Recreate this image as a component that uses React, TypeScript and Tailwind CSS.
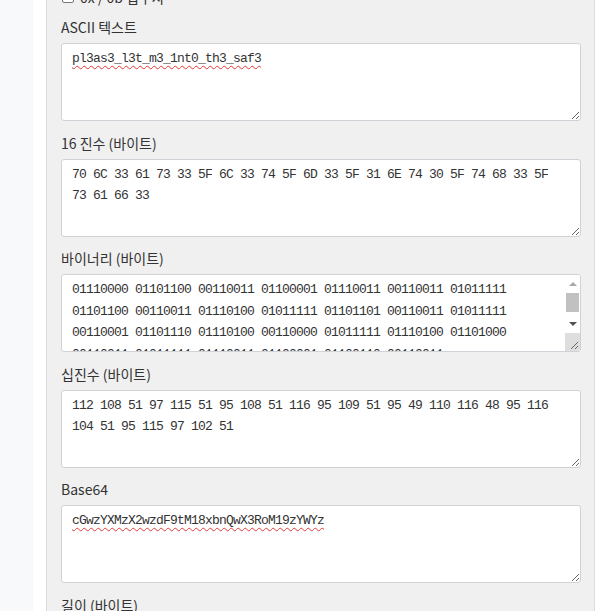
import React from "react";

const mono = { fontFamily: '"Liberation Mono", "DejaVu Sans Mono", monospace' };

const ascii = "pl3as3_l3t_m3_1nt0_th3_saf3";
const bytes = Array.from(ascii).map((c) => c.charCodeAt(0));
const hex = bytes.map((b) => b.toString(16).toUpperCase().padStart(2, "0")).join(" ");
const bin = bytes.map((b) => b.toString(2).padStart(8, "0")).join(" ");
const dec = bytes.join(" ");
const b64 = "cGwzYXMzX2wzdF9tM18xbnQwX3RoM19zYWYz";

function FakeScrollbar() {
  return (
    <div className="absolute top-[1px] right-[1px] bottom-[1px] w-[15px] bg-white flex flex-col pointer-events-none rounded-tr-[2px] rounded-br-[2px] overflow-hidden">
      <div className="h-[17px] flex items-center justify-center">
        <svg width="8" height="5" viewBox="0 0 8 5">
          <path d="M0 5 L4 1 L8 5 Z" fill="#a8a8a8" />
        </svg>
      </div>
      <div className="h-[24px] pt-[1px] px-[1px]">
        <div className="h-[19px] bg-[#c1c1c1]" />
      </div>
      <div className="h-[17px] flex items-center justify-center">
        <svg width="8" height="5" viewBox="0 0 8 5">
          <path d="M0 0 L8 0 L4 4 Z" fill="#505050" />
        </svg>
      </div>
      <div className="flex-1 bg-[#dedede] relative">
        <svg className="absolute right-[1px] bottom-[1px]" width="10" height="10" viewBox="0 0 10 10">
          <path d="M9 2 L2 9 M9 6 L6 9" stroke="#6b6b6b" strokeWidth="1" />
        </svg>
      </div>
    </div>
  );
}

function Field({
  label,
  value,
  wavy,
  scroll,
}: {
  label: string;
  value: string;
  wavy?: boolean;
  scroll?: boolean;
}) {
  return (
    <div className="flex flex-col mb-[11.5px]">
      <div className="h-[20px] leading-[20px] text-[14px] text-[#333] mb-[6px]">{label}</div>
      <div className="relative">
        <textarea
          readOnly
          spellCheck={false}
          value={value}
          style={mono}
          className={
            "block w-full h-[78px] bg-white border border-[#cfd2d6] rounded-[3px] pl-[10px] pr-[20px] pt-[4px] text-[13px] tracking-[-0.8px] leading-[21.5px] text-[#333] outline-none " +
            (scroll ? "overflow-hidden " : "") +
            (wavy ? "underline decoration-wavy decoration-[#e53935] decoration-[1px] underline-offset-[3px]" : "")
          }
        />
        {scroll && <FakeScrollbar />}
      </div>
    </div>
  );
}

export default function App() {
  return (
    <div
      className="w-[600px] h-[611px] overflow-hidden flex bg-white"
      style={{ fontFamily: '"Noto Sans CJK KR", "Noto Sans", "Liberation Sans", sans-serif' }}
    >
      <div className="w-[33px] shrink-0 bg-[#f8f9fb]" />
      <div className="w-[13px] shrink-0 bg-white" />
      <div className="w-[549px] shrink-0 bg-[#f0f0f0] border-l border-r border-[#dcdcdc] pl-[14px] pr-[13px] flex flex-col">
        <div className="-mt-[13px] h-[20px] flex items-center gap-[6px] mb-[10px] text-[14px] text-[#333]">
          <span className="w-[12px] h-[12px] ml-[1px] border border-[#777] rounded-[2px] bg-white" />
          <span>0x / 0b 접두사</span>
        </div>
        <Field label="ASCII 텍스트" value={ascii} wavy />
        <Field label="16 진수 (바이트)" value={hex} />
        <Field label="바이너리 (바이트)" value={bin} scroll />
        <Field label="십진수 (바이트)" value={dec} />
        <Field label="Base64" value={b64} wavy />
        <div className="h-[20px] leading-[20px] text-[14px] text-[#333]">길이 (바이트)</div>
      </div>
      <div className="flex-1 bg-white" />
    </div>
  );
}
